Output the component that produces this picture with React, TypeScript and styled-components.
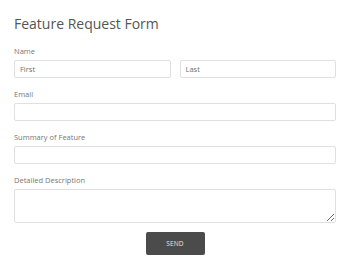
import styled, { createGlobalStyle } from 'styled-components'

const GlobalStyle = createGlobalStyle`
  html, body {
    margin: 0;
    padding: 0;
    background: #fff;
  }
  body {
    font-family: 'Open Sans', 'Noto Sans', sans-serif;
  }
`

const FormWrapper = styled.form`
  width: 350px;
  box-sizing: border-box;
  padding: 14px 14px 0 14px;
  display: flex;
  flex-direction: column;
`

const Title = styled.h1`
  margin: 0 0 13px 0;
  font-size: 14px;
  line-height: 19px;
  font-weight: 400;
  color: #555;
`

const Field = styled.div<{ $last?: boolean }>`
  display: flex;
  flex-direction: column;
  margin-bottom: ${(p) => (p.$last ? '9px' : '11px')};
`

const Label = styled.label`
  font-size: 7.5px;
  line-height: 10px;
  color: #777;
  margin-bottom: 4px;
`

const Row = styled.div`
  display: flex;
  gap: 9px;
`

const Input = styled.input<{ $half?: boolean }>`
  flex: ${(p) => (p.$half ? '1 1 0' : 'none')};
  min-width: 0;
  height: 18px;
  box-sizing: border-box;
  border: 1px solid #e0e0e0;
  border-radius: 2px;
  padding: 0 5px;
  font-family: inherit;
  font-size: 7.5px;
  color: #555;
  outline: none;
  &::placeholder {
    color: #707070;
  }
`

const TextArea = styled.textarea`
  height: 34px;
  box-sizing: border-box;
  border: 1px solid #e0e0e0;
  border-radius: 2px;
  padding: 4px 5px;
  font-family: inherit;
  font-size: 7.5px;
  outline: none;
  resize: vertical;
`

const Actions = styled.div`
  display: flex;
  justify-content: center;
`

const SendButton = styled.button`
  width: 59px;
  height: 23px;
  border: none;
  border-radius: 2px;
  background: #4b4b4b;
  color: #e4e4e4;
  font-family: inherit;
  font-size: 6.5px;
  letter-spacing: 0.2px;
  cursor: pointer;
`

const App = () => {
  return (
    <>
      <GlobalStyle />
      <FormWrapper onSubmit={(e) => e.preventDefault()}>
        <Title>Feature Request Form</Title>
        <Field>
          <Label>Name</Label>
          <Row>
            <Input $half placeholder="First" />
            <Input $half placeholder="Last" />
          </Row>
        </Field>
        <Field>
          <Label>Email</Label>
          <Input />
        </Field>
        <Field>
          <Label>Summary of Feature</Label>
          <Input />
        </Field>
        <Field $last>
          <Label>Detailed Description</Label>
          <TextArea />
        </Field>
        <Actions>
          <SendButton type="submit">SEND</SendButton>
        </Actions>
      </FormWrapper>
    </>
  )
}

export default App
